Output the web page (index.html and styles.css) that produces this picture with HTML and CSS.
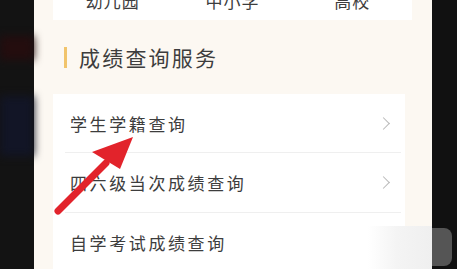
FILE: index.html
```html
<!DOCTYPE html>
<html lang="zh">
<head>
	<meta charset="UTF-8">
	<link rel="stylesheet" href="styles.css">
</head>
<body>

<div class="side side_left">
	<div class="side__blur side__blur_red"></div>
	<div class="side__blur side__blur_blue"></div>
</div>

<div class="panel">
	<div class="levels">
		<span class="levels__item">幼儿园</span>
		<span class="levels__item">中小学</span>
		<span class="levels__item">高校</span>
	</div>

	<h2 class="title">成绩查询服务</h2>

	<ul class="list">
		<li class="list__row">学生学籍查询<span class="list__arrow"></span></li>
		<li class="list__row">四六级当次成绩查询<span class="list__arrow"></span></li>
		<li class="list__row">自学考试成绩查询</li>
	</ul>
</div>

<div class="side side_right"></div>

<!-- red pointer drawn over the screenshot -->
<svg class="pointer" width="457" height="269" viewBox="0 0 457 269">
	<line x1="58" y1="211" x2="106" y2="163" stroke="#e2232b" stroke-width="7" stroke-linecap="round"/>
	<polygon points="133,137 92,152 120,169" fill="#e2232b"/>
</svg>

<div class="ghost"></div>
<div class="ghost__tab"></div>

</body>
</html>
```

FILE: styles.css
```css
body {
	display: flex;
	width: 457px;
	height: 269px;
	margin: 0;
	overflow: hidden;
	background: #141414;
	font-family: "Noto Sans CJK SC", "Noto Sans", sans-serif;
	color: #3d3d3d;
}

.side {
	position: relative;
	background: #131313;
}

.side_left {
	width: 34px;
	flex: none;
}

.side_right {
	flex: 1;
	background: #111;
}

.side__blur {
	height: 24px;
	margin-top: 36px;
	filter: blur(4px);
}

.side__blur_red {
	background: #240d0e;
}

.side__blur_blue {
	height: 60px;
	margin-top: 36px;
	background: #121526;
}

.panel {
	width: 398px;
	flex: none;
	box-sizing: border-box;
	padding-left: 19px;
	background: #fcf8f2;
}

.levels {
	display: grid;
	grid-template-columns: 1fr 1fr 1fr;
	align-items: center;
	justify-items: center;
	width: 359px;
	height: 40px;
	margin-top: -20px;
	background: #fff;
	font-size: 17px;
	letter-spacing: 1px;
}

.title {
	display: flex;
	align-items: center;
	height: 74px;
	margin: 0;
	padding-left: 11px;
	font-size: 21px;
	font-weight: normal;
	letter-spacing: 2.2px;
}

.title::before {
	content: "";
	width: 3px;
	height: 21px;
	margin-right: 12px;
	background: #f1c46c;
}

.list {
	width: 352px;
	margin: 0;
	padding: 0 4px 0 12px;
	box-sizing: border-box;
	list-style: none;
	background: #fff;
}

.list__row {
	display: flex;
	align-items: center;
	height: 59px;
	padding-left: 5px;
	font-size: 17px;
	letter-spacing: 2.6px;
	border-bottom: 1px solid #efefef;
}

.list__row:first-child {
	height: 58px;
}

.list__arrow {
	width: 8px;
	height: 8px;
	margin-left: auto;
	margin-right: 13px;
	border-top: 1.5px solid #b8b8b8;
	border-right: 1.5px solid #b8b8b8;
	transform: rotate(45deg);
}

.pointer {
	position: absolute;
	top: 0;
	left: 0;
}

.ghost {
	position: absolute;
	left: 368px;
	top: 226px;
	width: 64px;
	height: 43px;
	background: linear-gradient(90deg, rgba(248, 248, 248, 0) 0%, #f4f4f4 45%, #efefef 100%);
}

.ghost__tab {
	position: absolute;
	left: 432px;
	top: 228px;
	width: 20px;
	height: 38px;
	border-radius: 0 8px 8px 0;
	background: #555;
}
```
